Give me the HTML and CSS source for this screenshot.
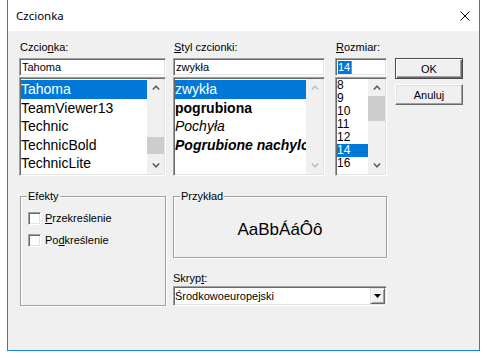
FILE: index.html
```html
<!DOCTYPE html>
<html lang="pl">
<head>
    <meta charset="UTF-8">
    <meta name="viewport" content="width=device-width, initial-scale=1.0">
    <title>Czcionka</title>
    <link rel="stylesheet" href="styles.css">
</head>
<body>
    <!-- okno dialogowe -->
    <div class="window">
        <!-- pasek tytułu -->
        <div class="title-bar">
            <span class="title">Czcionka</span>
            <svg class="close" width="10" height="10" viewBox="0 0 10 10">
                <path d="M0.5 0.5 L9.5 9.5 M9.5 0.5 L0.5 9.5" stroke="#000" stroke-width="1" fill="none"/>
            </svg>
        </div>

        <div class="client">
            <div class="top-row">
                <!-- czcionka -->
                <div class="font-column">
                    <div class="label">Czcio<u>n</u>ka:</div>
                    <div class="edit">Tahoma</div>
                    <div class="list">
                        <div class="items font-items">
                            <div class="item selected">Tahoma</div>
                            <div class="item">TeamViewer13</div>
                            <div class="item">Technic</div>
                            <div class="item">TechnicBold</div>
                            <div class="item">TechnicLite</div>
                        </div>
                        <div class="scrollbar">
                            <div class="arrow"><svg width="8" height="5" viewBox="0 0 8 5"><path d="M0.8 4.5 L4 1.2 L7.2 4.5"/></svg></div>
                            <div class="track"><div class="thumb font-thumb"></div></div>
                            <div class="arrow"><svg width="8" height="5" viewBox="0 0 8 5"><path d="M0.8 0.5 L4 3.8 L7.2 0.5"/></svg></div>
                        </div>
                    </div>
                </div>

                <!-- styl czcionki -->
                <div class="style-column">
                    <div class="label"><u>S</u>tyl czcionki:</div>
                    <div class="edit">zwykła</div>
                    <div class="list">
                        <div class="items style-items">
                            <div class="item selected">zwykła</div>
                            <div class="item bold">pogrubiona</div>
                            <div class="item italic">Pochyła</div>
                            <div class="item bold italic">Pogrubione nachylone</div>
                        </div>
                        <div class="scrollbar disabled">
                            <div class="arrow"><svg width="8" height="5" viewBox="0 0 8 5"><path d="M0.8 4.5 L4 1.2 L7.2 4.5"/></svg></div>
                            <div class="track"></div>
                            <div class="arrow"><svg width="8" height="5" viewBox="0 0 8 5"><path d="M0.8 0.5 L4 3.8 L7.2 0.5"/></svg></div>
                        </div>
                    </div>
                </div>

                <!-- rozmiar -->
                <div class="size-column">
                    <div class="label"><u>R</u>ozmiar:</div>
                    <div class="edit"><span class="selection">14</span><span class="caret"></span></div>
                    <div class="list">
                        <div class="items size-items">
                            <div class="item">8</div>
                            <div class="item">9</div>
                            <div class="item">10</div>
                            <div class="item">11</div>
                            <div class="item">12</div>
                            <div class="item selected">14</div>
                            <div class="item">16</div>
                        </div>
                        <div class="scrollbar">
                            <div class="arrow"><svg width="8" height="5" viewBox="0 0 8 5"><path d="M0.8 4.5 L4 1.2 L7.2 4.5"/></svg></div>
                            <div class="track"><div class="thumb size-thumb"></div></div>
                            <div class="arrow"><svg width="8" height="5" viewBox="0 0 8 5"><path d="M0.8 0.5 L4 3.8 L7.2 0.5"/></svg></div>
                        </div>
                    </div>
                </div>

                <!-- przyciski -->
                <div class="buttons">
                    <button type="button" class="button default">OK</button>
                    <button type="button" class="button">Anuluj</button>
                </div>
            </div>

            <div class="bottom-row">
                <!-- efekty -->
                <fieldset class="group effects">
                    <legend>Efekty</legend>
                    <div class="effects-body">
                        <div class="check"><span class="checkbox"></span><span><u>P</u>rzekreślenie</span></div>
                        <div class="check"><span class="checkbox"></span><span>Po<u>d</u>kreślenie</span></div>
                    </div>
                </fieldset>

                <div class="preview-column">
                    <fieldset class="group">
                        <legend>Przykład</legend>
                        <div class="sample">AaBbÁáÔô</div>
                    </fieldset>
                    <div class="label script-label">Skryp<u>t</u>:</div>
                    <div class="combo">
                        <span class="combo-text">Środkowoeuropejski</span>
                        <span class="combo-button">
                            <svg width="7" height="4" viewBox="0 0 7 4"><polygon points="0,0 7,0 3.5,4" fill="#000"/></svg>
                        </span>
                    </div>
                </div>
            </div>
        </div>
    </div>
</body>
</html>
```

FILE: styles.css
```css
/* ogólne */
html, body {
    margin: 0;
    padding: 0;
    background-color: #fff;
    font-family: "Liberation Sans", Arial, sans-serif;
    font-size: 11px;
    color: #000;
}

/* okno */
.window {
    width: 473px;
    height: 351px;
    margin-left: 7px;
    box-sizing: border-box;
    border: 1px solid #1883d7;
    border-top: none;
    display: flex;
    flex-direction: column;
}

.title-bar {
    height: 31px;
    flex-shrink: 0;
    display: flex;
    align-items: center;
    justify-content: space-between;
    padding: 0 9px 0 8px;
    background-color: #fff;
}

.title {
    font-family: "Noto Sans", sans-serif;
    font-size: 11.5px;
}

.client {
    flex: 1;
    background-color: #f0f0f0;
    padding: 10px 0 0 11px;
}

/* górny rząd */
.top-row {
    display: flex;
    align-items: flex-start;
}

.font-column {
    width: 147px;
    margin-right: 7px;
}

.style-column {
    width: 152px;
    margin-right: 10px;
}

.size-column {
    width: 52px;
    margin-right: 8px;
}

.label {
    height: 13px;
    line-height: 13px;
    margin-bottom: 4px;
    padding-left: 1px;
    white-space: nowrap;
}

/* wklęsłe ramki */
.edit, .list, .combo, .checkbox {
    box-sizing: border-box;
    border: 1px solid;
    border-color: #a0a0a0 #fff #fff #a0a0a0;
    box-shadow: inset 1px 1px 0 #696969, inset -1px -1px 0 #e3e3e3;
    background-color: #fff;
}

.edit {
    height: 18px;
    margin-bottom: 1px;
    padding: 1px 1px 1px 2px;
    display: flex;
    align-items: center;
    line-height: 14px;
    white-space: nowrap;
}

.selection {
    background-color: #0078d7;
    color: #fff;
    line-height: 13px;
    padding-right: 1px;
}

.caret {
    width: 1px;
    height: 13px;
    background-color: #e07b2c;
}

.list {
    height: 99px;
    padding: 1px;
    display: flex;
}

.items {
    flex: 1;
    min-width: 0;
    overflow: hidden;
}

.font-items {
    padding-top: 1px;
}

.item {
    white-space: nowrap;
    overflow: hidden;
}

.font-items .item, .style-items .item {
    font-size: 14px;
    line-height: 18.5px;
}

.style-items {
    padding-top: 1px;
}

.size-items .item {
    font-size: 12px;
    line-height: 13px;
}

.item.selected {
    background-color: #0078d7;
    color: #fff;
}

.bold {
    font-weight: bold;
}

.italic {
    font-style: italic;
}

/* pasek przewijania */
.scrollbar {
    width: 17px;
    flex-shrink: 0;
    display: flex;
    flex-direction: column;
    background-color: #f0f0f0;
}

.arrow {
    height: 17px;
    display: flex;
    align-items: center;
    justify-content: center;
}

.arrow svg path {
    fill: none;
    stroke: #606060;
    stroke-width: 1.6;
}

.scrollbar.disabled .arrow svg path {
    stroke: #c0c0c0;
}

.track {
    flex: 1;
}

.thumb {
    background-color: #cdcdcd;
}

.font-thumb {
    margin-top: 41px;
    height: 17px;
}

.size-thumb {
    height: 25px;
}

/* przyciski */
.buttons {
    width: 68px;
    padding-top: 17px;
    display: flex;
    flex-direction: column;
    gap: 5px;
}

.button {
    height: 21px;
    box-sizing: border-box;
    border: 1px solid;
    border-color: #fff #696969 #696969 #fff;
    box-shadow: inset -1px -1px 0 #a0a0a0, inset 1px 1px 0 #e3e3e3;
    background-color: #f0f0f0;
    font: inherit;
    color: #000;
    padding: 0;
    text-align: center;
}

.button.default {
    border-color: #4a4a4a;
    box-shadow: inset 1px 1px 0 #fff, inset -1px -1px 0 #696969, inset -2px -2px 0 #a0a0a0;
}

/* dolny rząd */
.bottom-row {
    display: flex;
    margin-top: 14px;
}

.group {
    margin: 0;
    padding: 0;
    min-width: 0;
    box-sizing: border-box;
    border: 1px solid #a0a0a0;
    box-shadow: 1px 1px 0 #fff, inset 1px 1px 0 #fff;
}

.group legend {
    padding: 0 1px;
    margin-left: 6px;
    line-height: 13px;
    background-color: #f0f0f0;
}

.effects {
    width: 146px;
    margin-left: 1px;
    margin-right: 7px;
}

.effects-body {
    padding: 9px 0 0 7px;
    display: flex;
    flex-direction: column;
    gap: 9px;
}

.check {
    height: 13px;
    line-height: 13px;
    display: flex;
    align-items: center;
}

.checkbox {
    width: 13px;
    height: 13px;
    margin-right: 4px;
}

.preview-column {
    width: 214px;
    display: flex;
    flex-direction: column;
}

.sample {
    height: 54px;
    display: flex;
    align-items: center;
    justify-content: center;
    font-size: 17px;
}

.script-label {
    margin-top: 14px;
    margin-bottom: 1px;
    padding-left: 0;
}

.combo {
    height: 20px;
    padding: 1px;
    display: flex;
    align-items: center;
}

.combo-text {
    flex: 1;
    line-height: 16px;
    white-space: nowrap;
}

.combo-button {
    width: 15px;
    height: 16px;
    box-sizing: border-box;
    border: 1px solid;
    border-color: #e3e3e3 #696969 #696969 #e3e3e3;
    box-shadow: inset 1px 1px 0 #fff, inset -1px -1px 0 #a0a0a0;
    background-color: #f0f0f0;
    display: flex;
    align-items: center;
    justify-content: center;
}
```
